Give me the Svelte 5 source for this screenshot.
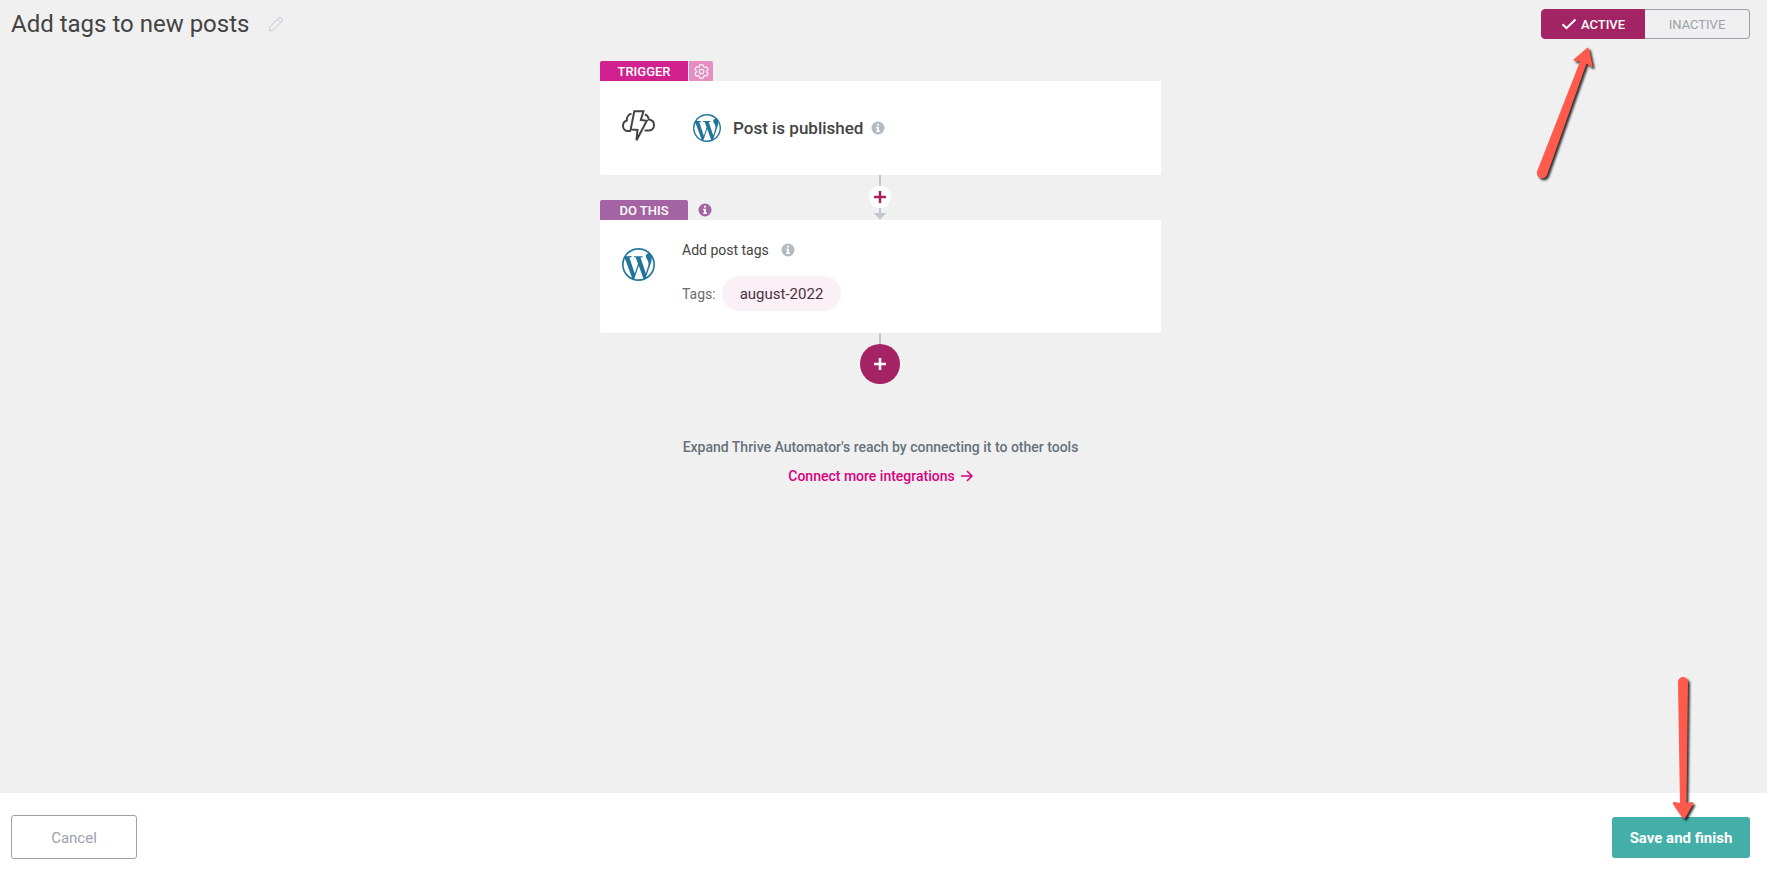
<!--
  Automation editor
  A trigger, the actions that follow it, and the save bar
-->
<script>
  let title = 'Add tags to new posts';
  let active = $state(true);
  let tags = $state(['august-2022']);
</script>

{#snippet wordpress()}
  <svg class="wordpress" viewBox="0 0 24 24" aria-hidden="true">
    <path d="M21.469 6.825c.84 1.537 1.318 3.3 1.318 5.175 0 3.979-2.156 7.456-5.363 9.325l3.295-9.527c.615-1.54.82-2.771.82-3.864 0-.405-.026-.78-.07-1.11m-7.981.105c.647-.03 1.232-.105 1.232-.105.582-.075.514-.93-.067-.899 0 0-1.755.135-2.88.135-1.064 0-2.85-.15-2.85-.15-.585-.03-.661.855-.075.885 0 0 .54.061 1.125.09l1.68 4.605-2.37 7.08L5.354 6.9c.649-.03 1.234-.1 1.234-.1.585-.075.516-.93-.065-.896 0 0-1.746.138-2.874.138-.2 0-.438-.008-.69-.015C4.911 3.15 8.235 1.215 12 1.215c2.809 0 5.365 1.072 7.286 2.833-.046-.003-.091-.009-.141-.009-1.06 0-1.812.923-1.812 1.914 0 .89.513 1.643 1.06 2.531.411.72.89 1.643.89 2.977 0 .915-.354 1.994-.821 3.479l-1.075 3.585-3.9-11.61.001.014zM12 22.784c-1.059 0-2.081-.153-3.048-.437l3.237-9.406 3.315 9.087c.024.053.05.101.078.149-1.12.393-2.325.609-3.582.609M1.211 12c0-1.564.336-3.05.935-4.39L7.29 21.709C3.694 19.96 1.212 16.271 1.211 12M12 0C5.385 0 0 5.385 0 12s5.385 12 12 12 12-5.385 12-12S18.615 0 12 0" />
  </svg>
{/snippet}

{#snippet info(label)}
  <button class="info" type="button" aria-label={label}>
    <svg viewBox="0 0 14 14">
      <circle cx="7" cy="7" r="6.5" />
      <path d="M6 2.8h2v1.8H6zM5.2 5.8H8v3.7h.9V11H5.2V9.5H6V7.2h-.8z" fill="#fff" />
    </svg>
  </button>
{/snippet}

<div class="page">
  <main>
    <header>
      <h1>{title}</h1>
      <button class="edit" type="button" aria-label="Edit title">
        <svg viewBox="0 0 16 16">
          <path d="M1.2 14.8l.7-4 8.9-8.9a1.6 1.6 0 0 1 2.3 0l1 1a1.6 1.6 0 0 1 0 2.3L5.200 14.100zM9.600 3.200l3.200 3.200" />
        </svg>
      </button>

      <div class="toggle">
        <button type="button" class:on={active} aria-pressed={active} onclick={() => (active = true)}>
          {#if active}
            <svg class="check" viewBox="0 0 16 12"><path d="M1.500 6.200l4 4 9-8.700" /></svg>
          {/if}
          ACTIVE
        </button>
        <button type="button" class:on={!active} aria-pressed={!active} onclick={() => (active = false)}>
          INACTIVE
        </button>
        <svg class="pointer pointer-toggle" viewBox="0 0 75 150" aria-hidden="true">
          <path d="M57.500 7.500L43.500 19.500Q43.500 21 45 21L50 21.500L7.200 131A5.200 5.200 0 0 0 17 135L56.500 23.500L61 27Q63 27.500 62.500 25.500L59 9Q58.500 7.500 57.500 7.500z" />
        </svg>
      </div>
    </header>

    <section class="flow">
      <div class="labels">
        <span class="label trigger">TRIGGER</span>
        <button class="settings" type="button" aria-label="Trigger settings">
          <svg viewBox="2 2 20 20">
            <path d="M9.594 3.94c.09-.542.56-.94 1.11-.94h2.593c.55 0 1.02.398 1.11.94l.213 1.281c.063.374.313.686.645.87.074.04.147.083.22.127.325.196.72.257 1.075.124l1.217-.456a1.125 1.125 0 0 1 1.37.49l1.296 2.247a1.125 1.125 0 0 1-.26 1.431l-1.003.827c-.293.241-.438.613-.43.992a7.723 7.723 0 0 1 0 .255c-.008.378.137.75.43.991l1.004.827c.424.35.534.955.26 1.43l-1.298 2.247a1.125 1.125 0 0 1-1.369.491l-1.217-.456c-.355-.133-.75-.072-1.076.124a6.47 6.47 0 0 1-.22.128c-.331.183-.581.495-.644.869l-.213 1.281c-.09.543-.56.94-1.11.94h-2.594c-.55 0-1.019-.398-1.11-.94l-.213-1.281c-.062-.374-.312-.686-.644-.87a6.52 6.52 0 0 1-.22-.127c-.325-.196-.72-.257-1.076-.124l-1.217.456a1.125 1.125 0 0 1-1.369-.49l-1.297-2.247a1.125 1.125 0 0 1 .26-1.431l1.004-.827c.292-.24.437-.613.43-.991a6.932 6.932 0 0 1 0-.255c.007-.38-.138-.751-.43-.992l-1.004-.827a1.125 1.125 0 0 1-.26-1.43l1.297-2.247a1.125 1.125 0 0 1 1.37-.491l1.216.456c.356.133.751.072 1.076-.124.072-.044.146-.086.22-.128.332-.183.582-.495.644-.869l.214-1.28Z" />
            <circle cx="12" cy="12" r="3" />
          </svg>
        </button>
      </div>

      <article class="card trigger-card">
        <svg class="storm" viewBox="0 0 33 32" aria-hidden="true">
          <path d="M12.300 1.200h9.200l-2.700 8.800 6 .8-10.300 19.500 1-10.300-6.800-.6z" />
          <path d="M9 21H6C3 21 1 18.600 1 15.800c0-2.600 1.600-4.600 3.800-5.300C4.600 7 6.500 4.200 9.500 3.800M22.800 4.400c2 .6 3.600 2.400 4 5 2.900.4 5.200 2.600 5.200 5.600 0 3.200-2.300 5.600-5.400 5.600h-4" />
        </svg>
        <div class="event">
          {@render wordpress()}
          <h2>Post is published</h2>
          {@render info('About this trigger')}
        </div>
      </article>

      <div class="connector">
        <div class="labels">
          <span class="label action">DO THIS</span>
          <span class="action-info">{@render info('About actions')}</span>
        </div>
        <div class="stem">
          <span class="line"></span>
          <button class="add small" type="button" aria-label="Add step here">
            <svg viewBox="0 0 12 12"><path d="M6 0v12M0 6h12" /></svg>
          </button>
          <span class="line short"></span>
          <svg class="arrowhead" viewBox="0 0 12 7"><path d="M0 0h12L6 7z" /></svg>
        </div>
      </div>

      <article class="card action-card">
        {@render wordpress()}
        <div class="details">
          <div class="name">
            <h3>Add post tags</h3>
            {@render info('About this action')}
          </div>
          <div class="tags">
            <span>Tags:</span>
            {#each tags as tag}
              <span class="tag">{tag}</span>
            {/each}
          </div>
        </div>
      </article>

      <div class="stem">
        <span class="line"></span>
        <button class="add large" type="button" aria-label="Add step">
          <svg viewBox="0 0 12 12"><path d="M6 0v12M0 6h12" /></svg>
        </button>
      </div>
    </section>

    <section class="expand">
      <p>Expand Thrive Automator's reach by connecting it to other tools</p>
      <a href="#integrations">
        Connect more integrations
        <svg viewBox="0 0 12 12"><path d="M0 6h11M6 1l5 5-5 5" /></svg>
      </a>
    </section>
  </main>

  <footer>
    <button class="cancel" type="button">Cancel</button>
    <div class="save-wrap">
      <button class="save" type="button">Save and finish</button>
      <svg class="pointer pointer-save" viewBox="0 0 40 160" aria-hidden="true">
        <path d="M13 12A5 5 0 0 1 23 12L21.500 133L27 132Q29 132.500 28 134L20.500 147.500Q19 149.500 17.500 147.500L8 134Q7.500 131.500 9.500 132L15 133z" />
      </svg>
    </div>
  </footer>
</div>

<style>
  :global(body) {
    margin: 0;
  }

  .page {
    --berry: #a32364;
    --wp-blue: #21759b;
    --stem: #bec7ce;
    --grey: #9ba1ab;

    display: flex;
    flex-direction: column;
    min-height: 100vh;
    background: #f0f0f0;
    color: #434343;
    font-family: Roboto, sans-serif;
    font-size: 14px;
  }

  button {
    display: flex;
    align-items: center;
    justify-content: center;
    box-sizing: border-box;
    margin: 0;
    padding: 0;
    border: none;
    background: none;
    font: inherit;
    cursor: pointer;
  }

  h1,
  h2,
  h3,
  p {
    margin: 0;
  }

  svg {
    display: block;
    flex-shrink: 0;
  }

  main {
    flex: 1;
    padding: 9px 17px 24px 11px;
  }

  header {
    display: flex;
    align-items: center;
    margin-bottom: 22px;
  }

  h1 {
    color: #434343;
    font-size: 24px;
    font-weight: 400;
    line-height: 30px;
  }

  .edit {
    margin-left: 19px;
  }

  .edit svg {
    width: 16px;
    height: 16px;
    fill: none;
    stroke: #c4c7cb;
  }

  .toggle {
    position: relative;
    display: flex;
    margin-left: auto;
  }

  .toggle button {
    gap: 4px;
    width: 105px;
    height: 30px;
    border: 1px solid var(--grey);
    border-left: none;
    border-radius: 0 4px 4px 0;
    color: var(--grey);
    font-size: 13px;
  }

  .toggle button:first-child {
    width: 104px;
    border-left: 1px solid var(--grey);
    border-radius: 4px 0 0 4px;
  }

  .toggle button.on {
    border-color: var(--berry);
    background: var(--berry);
    color: #fff;
    font-weight: 500;
  }

  .check {
    width: 16px;
    height: 12px;
    fill: none;
    stroke: currentColor;
    stroke-width: 2;
  }

  .pointer {
    position: absolute;
    overflow: visible;
    fill: #ff5a4c;
    filter: drop-shadow(2px 2px 1px rgba(0, 0, 0, 0.8));
    pointer-events: none;
  }

  .pointer-toggle {
    top: 31px;
    left: -11px;
    width: 75px;
    height: 150px;
  }

  .pointer-save {
    bottom: 28px;
    left: 53px;
    width: 40px;
    height: 160px;
  }

  .flow {
    width: 561px;
    max-width: 100%;
    margin: 0 auto;
  }

  .labels {
    display: flex;
    gap: 1px;
  }

  .label {
    width: 88px;
    height: 20px;
    border-radius: 2px 0 0 0;
    color: #fff;
    font-size: 13px;
    font-weight: 500;
    line-height: 22px;
    text-align: center;
  }

  .trigger {
    background: #d0218f;
  }

  .action {
    border-radius: 2px 2px 0 0;
    background: #a464a4;
  }

  .settings {
    width: 24px;
    height: 20px;
    border-radius: 0 2px 0 0;
    background: #e38dc3;
  }

  .settings svg {
    width: 15px;
    height: 15px;
    fill: none;
    stroke: #fff;
    stroke-width: 1.5;
  }

  .card {
    display: flex;
    box-sizing: border-box;
    padding: 0 22px;
    border-radius: 0 0 3px 3px;
    background: #fff;
  }

  .trigger-card {
    gap: 38px;
    min-height: 94px;
    align-items: center;
  }

  .storm {
    width: 33px;
    height: 32px;
    margin-bottom: 4px;
    fill: none;
    stroke: #434343;
    stroke-width: 2;
  }

  .event {
    display: flex;
    align-items: center;
  }

  .wordpress {
    width: 33px;
    height: 33px;
    fill: var(--wp-blue);
  }

  .event .wordpress {
    width: 28px;
    height: 28px;
    margin-right: 12px;
  }

  h2 {
    margin-right: 8px;
    font-size: 17px;
    font-weight: 500;
    line-height: 24px;
  }

  .info {
    color: #b2bac2;
  }

  .info svg {
    width: 14px;
    height: 14px;
    fill: currentColor;
  }

  .connector {
    display: grid;
    grid-template-columns: 1fr auto 1fr;
    align-items: end;
  }

  .action-info {
    display: flex;
    align-items: center;
    margin-left: 9px;
  }

  .action-info :global(.info) {
    color: #a464a4;
  }

  .stem {
    display: flex;
    flex-direction: column;
    align-items: center;
    padding-right: 1px;
  }

  .line {
    width: 2px;
    height: 11px;
    background: var(--stem);
  }

  .line.short {
    height: 5px;
  }

  .add {
    border-radius: 50%;
  }

  .add svg {
    width: 12px;
    height: 12px;
    fill: none;
    stroke: currentColor;
    stroke-width: 2.5;
  }

  .add.small {
    width: 22px;
    height: 22px;
    background: #fff;
    color: var(--berry);
  }

  .add.large {
    width: 40px;
    height: 40px;
    background: var(--berry);
    color: #fff;
  }

  .arrowhead {
    width: 12px;
    height: 7px;
    fill: var(--stem);
  }

  .action-card {
    gap: 27px;
    min-height: 113px;
    padding-top: 20px;
  }

  .action-card .wordpress {
    margin-top: 8px;
  }

  .name {
    display: flex;
    align-items: center;
    gap: 12px;
    margin-bottom: 16px;
  }

  h3 {
    font-size: 14px;
    font-weight: 400;
    line-height: 20px;
  }

  .tags {
    display: flex;
    align-items: center;
    gap: 6px;
    color: #6d6d6d;
  }

  .tag {
    height: 35px;
    padding: 0 18px;
    border-radius: 18px;
    background: #faf0f6;
    color: #4c2f3f;
    font-size: 15px;
    line-height: 36px;
  }

  .expand {
    display: flex;
    flex-direction: column;
    align-items: center;
    gap: 9px;
    margin-top: 53px;
    color: #66727c;
    font-weight: 500;
    line-height: 20px;
    text-align: center;
  }

  .expand a {
    display: flex;
    align-items: center;
    gap: 6px;
    color: #d8007f;
    text-decoration: none;
  }

  .expand a svg {
    width: 12px;
    height: 12px;
    fill: none;
    stroke: currentColor;
    stroke-width: 1.5;
  }

  footer {
    display: flex;
    align-items: center;
    justify-content: space-between;
    min-height: 83px;
    box-sizing: border-box;
    padding: 5px 17px 0 11px;
    background: #fff;
    font-size: 15px;
  }

  .cancel {
    width: 126px;
    height: 44px;
    padding-top: 1px;
    border: 1px solid var(--grey);
    border-radius: 3px;
    color: var(--grey);
  }

  .save-wrap {
    position: relative;
  }

  .save {
    width: 138px;
    height: 41px;
    padding-top: 1px;
    border-radius: 3px;
    background: #43afa8;
    color: #fff;
    font-weight: 700;
  }
</style>
